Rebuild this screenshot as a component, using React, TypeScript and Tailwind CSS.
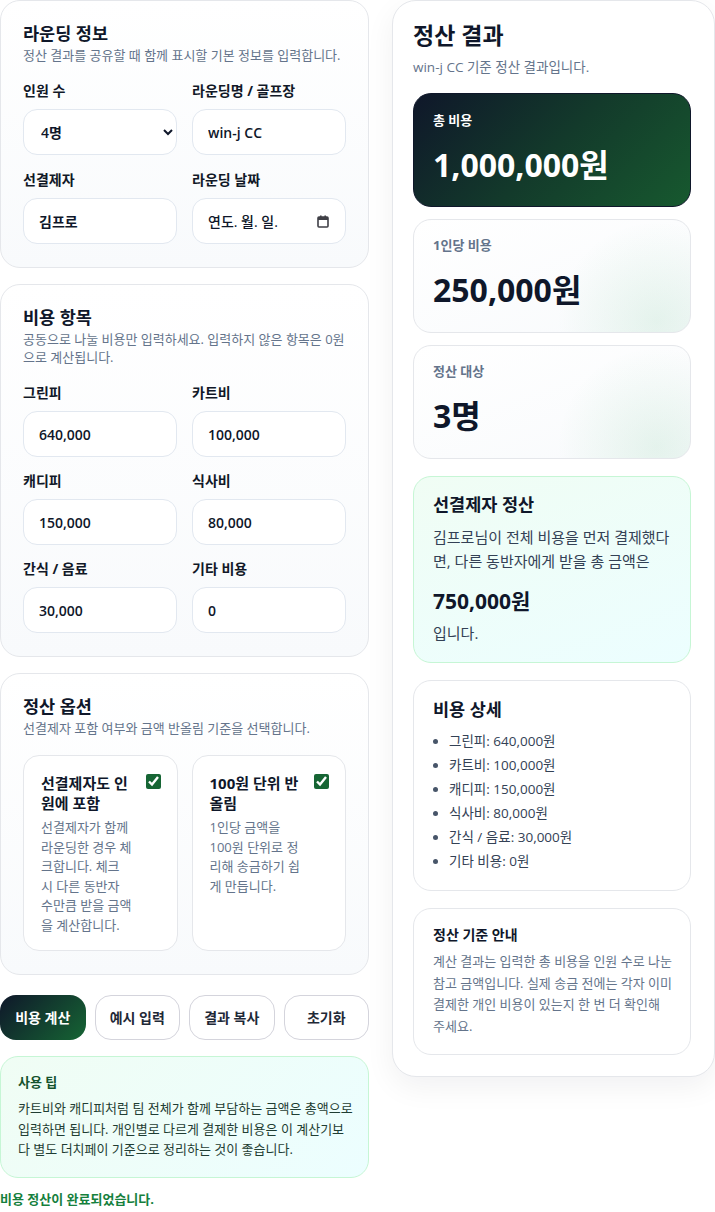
import { useState } from "react";

const cardClass =
  "rounded-[20px] border border-[#e5e7eb] bg-[linear-gradient(180deg,#ffffff,#f8fafc)] px-[22px] pt-[21px] pb-[23px]";
const inputClass =
  "h-[46px] w-full rounded-[14px] border border-[#e2e8f0] bg-white px-[15px] text-[14px] font-semibold text-[#0f172a] outline-none";
const statClass =
  "rounded-[18px] border border-[#e5e7eb] bg-[radial-gradient(circle_at_88%_90%,rgba(22,163,74,0.09),transparent_38%),linear-gradient(160deg,#ffffff,#f8fafc)] px-[19px] pt-[16px] pb-[22px]";

function Field({ label, children }: { label: string; children: React.ReactNode }) {
  return (
    <div className="flex flex-col">
      <label className="mb-[9px] text-[14px] leading-[18px] font-bold text-[#111827]">{label}</label>
      {children}
    </div>
  );
}

function CardHead({ title, desc }: { title: string; desc: string }) {
  return (
    <>
      <h2 className="text-[17.5px] leading-[22px] font-bold text-[#0f172a]">{title}</h2>
      <p className="mt-[2px] text-[13px] leading-[18px] text-[#64748b]">{desc}</p>
    </>
  );
}

function Option({ title, desc }: { title: string; desc: string }) {
  const [on, setOn] = useState(true);
  return (
    <label className="flex gap-[12px] rounded-[16px] border border-[#e5e7eb] bg-white pt-[17px] pr-[16px] pb-[15px] pl-[17px]">
      <div className="flex-1">
        <p className="text-[15px] leading-[20px] font-bold text-[#0f172a]">{title}</p>
        <p className="mt-[5px] text-[13px] leading-[19.5px] text-[#64748b]">{desc}</p>
      </div>
      <input
        type="checkbox"
        checked={on}
        onChange={() => setOn(!on)}
        className="m-0 mt-[1px] h-[15px] w-[15px] shrink-0 accent-[#166534]"
      />
    </label>
  );
}

export default function App() {
  const details = [
    "그린피: 640,000원",
    "카트비: 100,000원",
    "캐디피: 150,000원",
    "식사비: 80,000원",
    "간식 / 음료: 30,000원",
    "기타 비용: 0원",
  ];

  return (
    <div className="grid w-[715px] grid-cols-[369px_323px] gap-[23px] bg-white font-['Open_Sans','Noto_Sans_CJK_KR',sans-serif]">
      <div className="flex flex-col gap-4">
        <section className={cardClass}>
          <CardHead title="라운딩 정보" desc="정산 결과를 공유할 때 함께 표시할 기본 정보를 입력합니다." />
          <div className="mt-[18px] grid grid-cols-2 gap-x-[15px] gap-y-[16px]">
            <Field label="인원 수">
              <select defaultValue="4" className={inputClass + " pl-[13px] pr-[6px]"}>
                <option value="2">2명</option>
                <option value="3">3명</option>
                <option value="4">4명</option>
                <option value="5">5명</option>
                <option value="6">6명</option>
              </select>
            </Field>
            <Field label="라운딩명 / 골프장">
              <input className={inputClass} defaultValue="win-j CC" />
            </Field>
            <Field label="선결제자">
              <input className={inputClass} defaultValue="김프로" />
            </Field>
            <Field label="라운딩 날짜">
              <div className={inputClass + " flex items-center justify-between pr-[16px]"}>
                <span className="font-medium">연도. 월. 일.</span>
                <svg width="12" height="13" viewBox="0 0 12 13" className="text-[#3f3f46]">
                  <rect x="1" y="2" width="10" height="10" rx="1" fill="none" stroke="currentColor" strokeWidth="1.6" />
                  <rect x="1" y="2" width="10" height="3" fill="currentColor" />
                  <rect x="3" y="0.5" width="1.6" height="2.5" fill="currentColor" />
                  <rect x="7.4" y="0.5" width="1.6" height="2.5" fill="currentColor" />
                </svg>
              </div>
            </Field>
          </div>
        </section>

        <section className={cardClass}>
          <CardHead
            title="비용 항목"
            desc="공동으로 나눌 비용만 입력하세요. 입력하지 않은 항목은 0원으로 계산됩니다."
          />
          <div className="mt-[18px] grid grid-cols-2 gap-x-[15px] gap-y-[15px]">
            <Field label="그린피">
              <input className={inputClass} defaultValue="640,000" />
            </Field>
            <Field label="카트비">
              <input className={inputClass} defaultValue="100,000" />
            </Field>
            <Field label="캐디피">
              <input className={inputClass} defaultValue="150,000" />
            </Field>
            <Field label="식사비">
              <input className={inputClass} defaultValue="80,000" />
            </Field>
            <Field label="간식 / 음료">
              <input className={inputClass} defaultValue="30,000" />
            </Field>
            <Field label="기타 비용">
              <input className={inputClass} defaultValue="0" />
            </Field>
          </div>
        </section>

        <section className={cardClass}>
          <CardHead title="정산 옵션" desc="선결제자 포함 여부와 금액 반올림 기준을 선택합니다." />
          <div className="mt-[18px] grid grid-cols-2 gap-[14px]">
            <Option
              title="선결제자도 인원에 포함"
              desc="선결제자가 함께 라운딩한 경우 체크합니다. 체크 시 다른 동반자 수만큼 받을 금액을 계산합니다."
            />
            <Option title="100원 단위 반올림" desc="1인당 금액을 100원 단위로 정리해 송금하기 쉽게 만듭니다." />
          </div>
        </section>

        <div className="mt-1 grid grid-cols-4 gap-[9px]">
          <button className="h-[45px] rounded-[16px] bg-[linear-gradient(135deg,#0f172a,#166534)] text-[14px] font-bold text-white">
            비용 계산
          </button>
          <button className="h-[45px] rounded-[16px] border border-[#d4d4dc] bg-white text-[14px] font-bold text-[#1f2937]">
            예시 입력
          </button>
          <button className="h-[45px] rounded-[16px] border border-[#d4d4dc] bg-white text-[14px] font-bold text-[#1f2937]">
            결과 복사
          </button>
          <button className="h-[45px] rounded-[16px] border border-[#d4d4dc] bg-white text-[14px] font-bold text-[#1f2937]">
            초기화
          </button>
        </div>

        <div className="rounded-[18px] border border-[#c6f6d5] bg-[linear-gradient(135deg,#f0fdf4,#ecfeff)] pt-[16px] pr-[14px] pb-[17px] pl-[17px]">
          <p className="text-[13px] leading-[18px] font-bold text-[#14532d]">사용 팁</p>
          <p className="mt-[7px] text-[13px] leading-[20.5px] text-[#1f3d33]">
            카트비와 캐디피처럼 팀 전체가 함께 부담하는 금액은 총액으로 입력하면 됩니다. 개인별로 다르게 결제한 비용은 이 계산기보다 별도 더치페이 기준으로 정리하는 것이 좋습니다.
          </p>
        </div>

        <p className="-mt-1 text-[13px] leading-[18px] font-bold text-[#15803d]">비용 정산이 완료되었습니다.</p>
      </div>

      <aside className="self-start rounded-[24px] border border-[#e5e7eb] bg-white pt-[19px] pr-[23px] pb-[21px] pl-[20px] shadow-[0_10px_30px_rgba(15,23,42,0.06)]">
        <h1 className="text-[23px] leading-[30px] font-bold text-[#0f172a]">정산 결과</h1>
        <p className="mt-[7px] text-[13.5px] leading-[20px] text-[#64748b]">win-j CC 기준 정산 결과입니다.</p>

        <div className="mt-[16px] flex flex-col gap-[12px]">
          <div className="rounded-[18px] border border-[#0f172a] bg-[linear-gradient(135deg,#0f172a_0%,#133a2b_50%,#17592f_100%)] px-[19px] pt-[17px] pb-[21px]">
            <p className="text-[13px] leading-[18px] font-bold text-white">총 비용</p>
            <p className="mt-[16px] text-[32px] leading-[40px] font-bold text-white">1,000,000원</p>
          </div>
          <div className={statClass}>
            <p className="text-[13px] leading-[18px] font-bold text-[#64748b]">1인당 비용</p>
            <p className="mt-[16px] text-[32px] leading-[40px] font-bold text-[#0f172a]">250,000원</p>
          </div>
          <div className={statClass}>
            <p className="text-[13px] leading-[18px] font-bold text-[#64748b]">정산 대상</p>
            <p className="mt-[16px] text-[32px] leading-[40px] font-bold text-[#0f172a]">3명</p>
          </div>
        </div>

        <div className="mt-[17px] rounded-[18px] border border-[#c6f6d5] bg-[linear-gradient(160deg,#f0fdf4,#ecfeff)] px-[19px] pt-[16px] pb-[17px]">
          <h3 className="text-[17.5px] leading-[22px] font-bold text-[#0f172a]">선결제자 정산</h3>
          <p className="mt-[10px] text-[15px] leading-[24px] text-[#334155]">
            김프로님이 전체 비용을 먼저 결제했다면, 다른 동반자에게 받을 총 금액은
          </p>
          <p className="mt-[14px] text-[21px] leading-[28px] font-bold text-[#0f172a]">750,000원</p>
          <p className="mt-[6px] text-[15px] leading-[24px] text-[#334155]">입니다.</p>
        </div>

        <div className="mt-[17px] rounded-[18px] border border-[#e5e7eb] bg-white px-[19px] pt-[17px] pb-[17px]">
          <h3 className="text-[17.5px] leading-[22px] font-bold text-[#0f172a]">비용 상세</h3>
          <ul className="mt-[9px] list-disc pl-[16px] text-[13.5px] leading-[24px] text-[#334155] marker:text-[#475569]">
            {details.map((d) => (
              <li key={d}>{d}</li>
            ))}
          </ul>
        </div>

        <div className="mt-[17px] rounded-[18px] border border-[#e5e7eb] bg-white pt-[16px] pr-[13px] pb-[17px] pl-[19px]">
          <h3 className="text-[14px] leading-[20px] font-bold text-[#0f172a]">정산 기준 안내</h3>
          <p className="mt-[6px] break-keep text-[13px] leading-[21.5px] text-[#64748b]">
            계산 결과는 입력한 총 비용을 인원 수로 나눈 참고 금액입니다. 실제 송금 전에는 각자 이미 결제한 개인 비용이 있는지 한 번 더 확인해 주세요.
          </p>
        </div>
      </aside>
    </div>
  );
}
